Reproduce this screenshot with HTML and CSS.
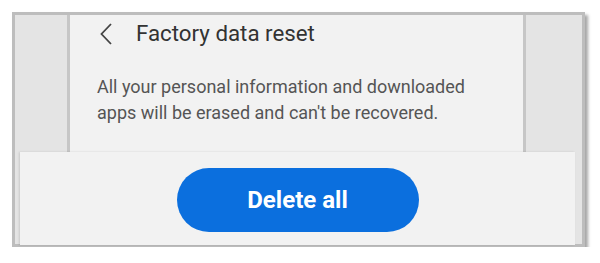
FILE: index.html
```html
<!DOCTYPE html>
<html lang="en">
<head>
  <meta charset="UTF-8" />
  <title>Factory data reset</title>
  <link rel="stylesheet" href="styles.css">
</head>
<body>
  <div class="frame">
    <div class="screen">
      <div class="top-bar">
        <svg class="back" width="12" height="22" viewBox="0 0 12 22">
          <path d="M11 1 L1.5 11 L11 21" fill="none" stroke="#444" stroke-width="1.8" />
        </svg>
        <h1>Factory data reset</h1>
      </div>
      <p class="info">All your personal information and downloaded apps will be erased and can't be recovered.</p>
    </div>

    <div class="sheet">
      <button class="delete-btn">Delete all</button>
    </div>
  </div>
</body>
</html>
```

FILE: styles.css
```css
body {
  margin: 0;
  background: #fff;
  font-family: Roboto, 'Liberation Sans', sans-serif;
}

.frame {
  position: relative;
  margin: 12px 0 0 12px;
  width: 567px;
  height: 229px;
  border: 3px solid #bdbdbd;
  background: #e4e4e4;
  box-shadow: 3px 3px 3px rgba(0, 0, 0, 0.35);
  display: flex;
}

.screen {
  margin-left: 52px;
  width: 453px;
  border-left: 3px solid #c6c6c6;
  border-right: 3px solid #c6c6c6;
  background: #f2f2f2;
}

.top-bar {
  display: flex;
  align-items: center;
  height: 36px;
  padding-left: 30px;
}

.back {
  margin-top: 2px;
}

.top-bar h1 {
  margin: 0 0 0 24px;
  font-size: 22.3px;
  font-weight: 400;
  color: #333;
}

.info {
  margin: 23px 0 0 27px;
  width: 400px;
  font-size: 18px;
  line-height: 26px;
  color: #555;
}

.sheet {
  position: absolute;
  left: 5px;
  top: 137px;
  width: 555px;
  height: 93px;
  background: #f2f2f2;
  box-shadow: -1px 0 2px rgba(0, 0, 0, 0.12);
  display: flex;
  justify-content: center;
  padding-top: 16px;
  box-sizing: border-box;
}

.delete-btn {
  width: 242px;
  height: 64px;
  border: none;
  border-radius: 32px;
  background: #0b6fde;
  color: #fff;
  font-family: Roboto, 'Liberation Sans', sans-serif;
  font-size: 24px;
  font-weight: bold;
}
```
